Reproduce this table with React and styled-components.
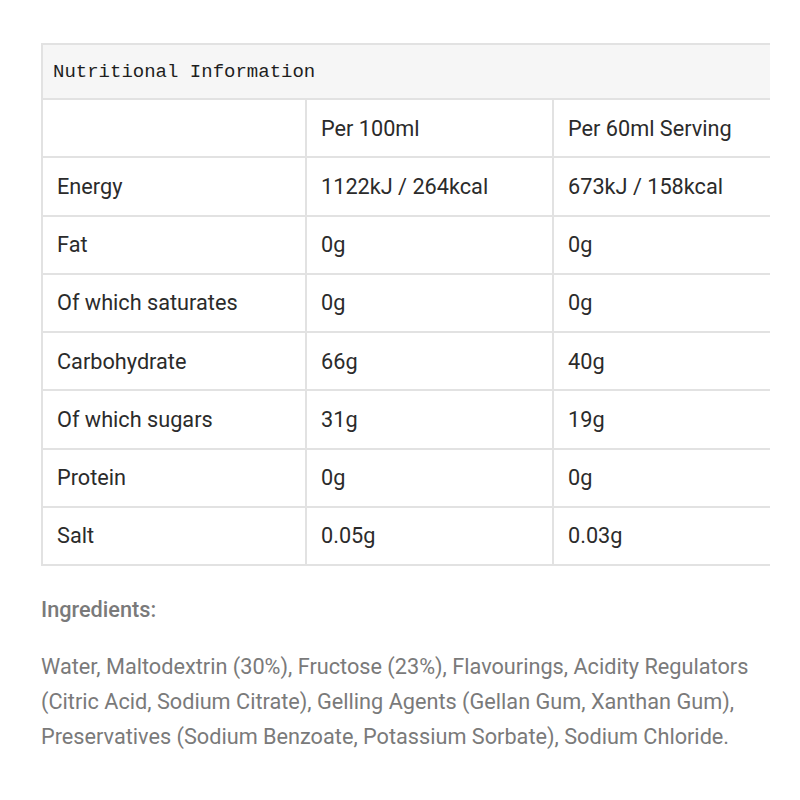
import React from 'react';
import styled, { createGlobalStyle } from 'styled-components';

const GlobalStyle = createGlobalStyle`
  body {
    margin: 0;
    background: #fff;
    font-family: Roboto, "Liberation Sans", sans-serif;
  }
`;

const Page = styled.div`
  padding: 43px 0 0 41px;
`;

const TableWrap = styled.div`
  width: 729px;
  overflow: hidden;
`;

const Table = styled.table`
  border-collapse: collapse;
  width: 760px;
  table-layout: fixed;
  color: #2b2b2b;
  font-size: 21.7px;
`;

const Caption = styled.th`
  background: #f6f6f6;
  border: 2px solid #e2e2e2;
  height: 53px;
  padding: 0 10px;
  text-align: left;
  font-family: "Liberation Mono", "DejaVu Sans Mono", monospace;
  font-weight: normal;
  font-size: 19px;
  color: #1e1e1e;
`;

const Cell = styled.td`
  border: 2px solid #e2e2e2;
  height: 56.25px;
  padding: 0 14px;
  vertical-align: middle;
  white-space: nowrap;
`;

const Ingredients = styled.div`
  width: 732px;
  color: #7a7a7a;
  margin-top: 32px;
`;

const Heading = styled.h4`
  margin: 0 0 27px;
  font-size: 21.7px;
  font-weight: 500;
  line-height: 24px;
`;

const Text = styled.p`
  margin: 0;
  font-size: 21.7px;
  line-height: 35px;
`;

const rows = [
  ['', 'Per 100ml', 'Per 60ml Serving'],
  ['Energy', '1122kJ / 264kcal', '673kJ / 158kcal'],
  ['Fat', '0g', '0g'],
  ['Of which saturates', '0g', '0g'],
  ['Carbohydrate', '66g', '40g'],
  ['Of which sugars', '31g', '19g'],
  ['Protein', '0g', '0g'],
  ['Salt', '0.05g', '0.03g'],
];

export default function App() {
  return (
    <Page>
      <GlobalStyle />
      <TableWrap>
        <Table>
          <colgroup>
            <col style={{ width: 264 }} />
            <col style={{ width: 247 }} />
            <col style={{ width: 249 }} />
          </colgroup>
          <thead>
            <tr>
              <Caption colSpan={3}>Nutritional Information</Caption>
            </tr>
          </thead>
          <tbody>
            {rows.map((r, i) => (
              <tr key={i}>
                {r.map((c, j) => (
                  <Cell key={j}>{c}</Cell>
                ))}
              </tr>
            ))}
          </tbody>
        </Table>
      </TableWrap>
      <Ingredients>
        <Heading>Ingredients:</Heading>
        <Text>
          Water, Maltodextrin (30%), Fructose (23%), Flavourings, Acidity Regulators
          (Citric Acid, Sodium Citrate), Gelling Agents (Gellan Gum, Xanthan Gum),
          Preservatives (Sodium Benzoate, Potassium Sorbate), Sodium Chloride.
        </Text>
      </Ingredients>
    </Page>
  );
}
